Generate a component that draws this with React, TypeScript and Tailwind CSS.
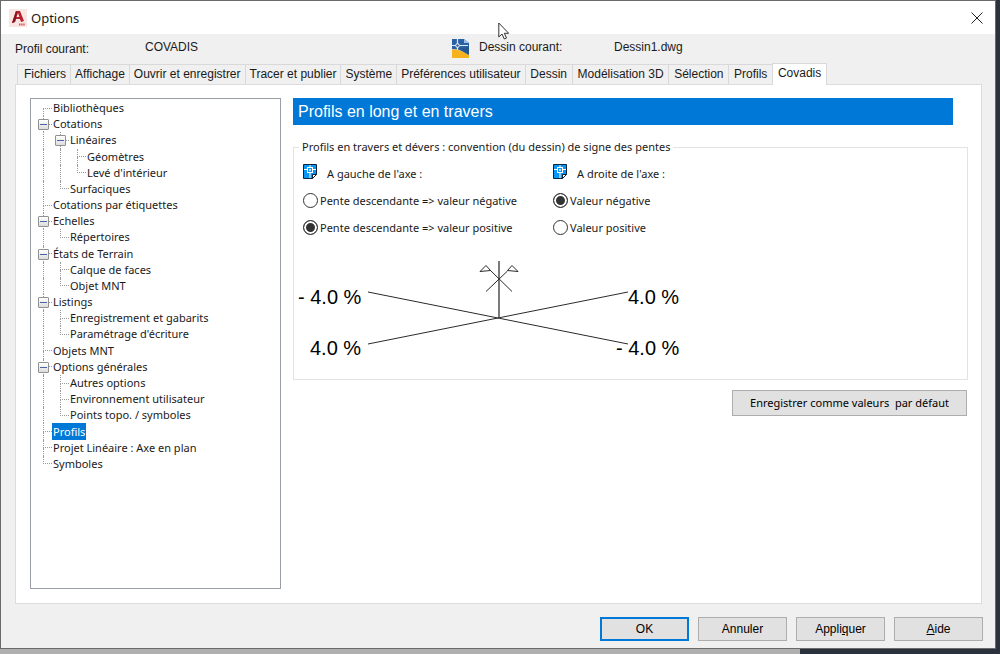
import { useState, type ReactNode } from "react";
import clsx from "clsx";

const TABS = [
  "Fichiers",
  "Affichage",
  "Ouvrir et enregistrer",
  "Tracer et publier",
  "Système",
  "Préférences utilisateur",
  "Dessin",
  "Modélisation 3D",
  "Sélection",
  "Profils",
  "Covadis",
];

type TreeNode = { label: string; children?: TreeNode[] };

const TREE: TreeNode[] = [
  { label: "Bibliothèques" },
  {
    label: "Cotations",
    children: [
      { label: "Linéaires", children: [{ label: "Géomètres" }, { label: "Levé d'intérieur" }] },
      { label: "Surfaciques" },
    ],
  },
  { label: "Cotations par étiquettes" },
  { label: "Echelles", children: [{ label: "Répertoires" }] },
  { label: "États de Terrain", children: [{ label: "Calque de faces" }, { label: "Objet MNT" }] },
  {
    label: "Listings",
    children: [{ label: "Enregistrement et gabarits" }, { label: "Paramétrage d'écriture" }],
  },
  { label: "Objets MNT" },
  {
    label: "Options générales",
    children: [
      { label: "Autres options" },
      { label: "Environnement utilisateur" },
      { label: "Points topo. / symboles" },
    ],
  },
  { label: "Profils" },
  { label: "Projet Linéaire : Axe en plan" },
  { label: "Symboles" },
];

type Row = { label: string; guides: boolean[]; first: boolean; last: boolean; parent: boolean };

// guides holds, for each ancestor level, whether its vertical line goes on below
function flatten(nodes: TreeNode[], guides: boolean[] = []): Row[] {
  return nodes.flatMap((n, i) => {
    const last = i === nodes.length - 1;
    return [
      { label: n.label, guides, first: i === 0 && guides.length === 0, last, parent: !!n.children },
      ...flatten(n.children ?? [], [...guides, !last]),
    ];
  });
}

const ROWS = flatten(TREE);

function TreeRow({ row, selected, onSelect }: { row: Row; selected: boolean; onSelect: () => void }) {
  return (
    <li role="treeitem" aria-selected={selected} className="flex min-h-0 flex-1 items-stretch">
      {row.guides.map((on, i) => (
        <span key={i} className="flex w-[17px] shrink-0 pl-2">
          {on && <span className="border-l border-dotted border-[#999]" />}
        </span>
      ))}
      <span className="relative flex w-[17px] shrink-0 flex-col pl-2">
        <span
          className={clsx(
            "flex-1 border-b border-dotted border-[#999]",
            !row.first && "border-l",
          )}
        />
        <span className={clsx("flex-1 border-dotted border-[#999]", !row.last && "border-l")} />
        {row.parent && (
          <button
            type="button"
            aria-label={`Réduire ${row.label}`}
            className="absolute top-[3px] left-[3px] flex h-[11px] w-[11px] items-center justify-center rounded-[1px] border border-[#919191] bg-linear-to-b from-white to-[#dcdcdc]"
          >
            <span className="h-px w-[7px] bg-[#4b63a7]" />
          </button>
        )}
      </span>
      <button
        type="button"
        onClick={onSelect}
        className={clsx(
          "flex items-center px-px leading-4 whitespace-nowrap",
          selected && "bg-[#0078d7] text-white",
        )}
      >
        {row.label}
      </button>
    </li>
  );
}

function SheetIcon() {
  return (
    <svg width="14" height="15" viewBox="0 0 14 15" aria-hidden="true">
      <path d="M.5.5h13v10l-4 4h-9z" fill="#0a96f5" stroke="#10233c" />
      <path d="M1 5.5h3M10 5.5h3M7 1v2M7 9v5" stroke="#fff" fill="none" />
      <rect x="4.5" y="3.5" width="5" height="5" fill="#0a96f5" stroke="#fff" />
      <path d="M6 5h2v2H6z" fill="#bfe3ff" />
      <path d="M9.5 14.5v-4h4z" fill="#fff" stroke="#10233c" />
    </svg>
  );
}

function Radio(props: { name: string; label: string; checked: boolean; onChange: () => void }) {
  return (
    <label className="flex h-[27px] items-center gap-0.5">
      <input
        type="radio"
        name={props.name}
        checked={props.checked}
        onChange={props.onChange}
        className="size-[15px] shrink-0 appearance-none rounded-full border border-[#333] bg-white checked:bg-[#333] checked:shadow-[inset_0_0_0_2px_white]"
      />
      {props.label}
    </label>
  );
}

function SlopeGroup(props: { name: string; title: string; options: string[]; initial: number }) {
  const [value, setValue] = useState(props.initial);
  return (
    <div role="radiogroup" aria-labelledby={`${props.name}-title`}>
      <div className="flex h-[27px] items-center gap-[10px]">
        <span className="pb-1">
          <SheetIcon />
        </span>
        <span id={`${props.name}-title`}>{props.title}</span>
      </div>
      {props.options.map((o, i) => (
        <Radio key={o} name={props.name} label={o} checked={value === i} onChange={() => setValue(i)} />
      ))}
    </div>
  );
}

function SlopeDiagram() {
  return (
    <svg
      width="400"
      height="137"
      viewBox="294 242 400 137"
      className="block max-w-full font-['Liberation_Sans',Arial,sans-serif] text-[20px]"
      role="img"
      aria-label="Convention de signe des pentes"
    >
      <g fill="none" stroke="#2b2b2b">
        <path d="M368 292 628 344M368 344 628 292" />
        <path d="M499 261v57" stroke="#444" strokeWidth="1.4" />
        <path d="M486 291.500 507.500 271M512 291.500 490 270" />
        <path d="M490.500 270.500 486 265.500 480 271.500 490.500 270.500M507.500 270.500 512 265.500 518 271.500 507.500 270.500" />
      </g>
      <g fill="#000">
        <text x="298" y="304">- 4.0 %</text>
        <text x="310" y="355">4.0 %</text>
        <text x="628" y="304">4.0 %</text>
        <text x="616" y="355">- 4.0 %</text>
      </g>
    </svg>
  );
}

function DialogButton({ children, primary }: { children: ReactNode; primary?: boolean }) {
  return (
    <button
      type="button"
      className={clsx(
        "h-6 w-[89px] bg-[#e1e1e1] text-black",
        primary ? "border-2 border-[#0078d7]" : "border border-[#adadad]",
      )}
    >
      {children}
    </button>
  );
}

export default function App() {
  const [tab, setTab] = useState("Covadis");
  const [node, setNode] = useState("Profils");

  return (
    <div className="flex min-h-screen flex-col bg-[#2b323d] font-['Liberation_Sans',Arial,sans-serif] text-[12px] leading-4 text-[#1a1a1a]">
      <div className="mr-1 flex flex-1 flex-col border border-[#6a6a6a] bg-[#f0f0f0]">
        <header className="flex h-[33px] items-center bg-white pr-3 pl-2">
          <svg width="18" height="18" viewBox="0 0 18 18" aria-hidden="true">
            <path d="M0 0h18v18H0z" fill="#f9e6e2" />
            <path d="M3 14 7 2h4l4 10-3 1-1-3H7l-1 3z" fill="#b5202c" />
            <path d="M7.500 8 9 4l1.500 4z" fill="#f9e6e2" />
            <path d="M3 14 7 2l1 1-2 10z" fill="#7f151e" />
            <path d="M10 15.500h6" stroke="#e5575b" strokeWidth="2" strokeDasharray="1.500 .6" />
          </svg>
          <h1 className="ml-1 font-['Noto_Sans',sans-serif] text-[13px] leading-5">Options</h1>
          <button type="button" aria-label="Fermer" className="ml-auto">
            <svg width="12" height="12" viewBox="0 0 12 12">
              <path d="M.5.5l11 11M11.500.5l-11 11" stroke="#222" />
            </svg>
          </button>
        </header>

        <div className="flex h-[29px] items-center pl-[14px]">
          <span className="w-[130px]">Profil courant:</span>
          <span className="w-[307px] pb-1">COVADIS</span>
          <svg width="17" height="19" viewBox="0 0 17 19" aria-hidden="true">
            <path d="M0 0h12l5 4v8L0 10z" fill="#2b62a4" />
            <path d="M12 0v4h5z" fill="#9fc0e4" />
            <path d="M0 10.500h6l11 5V19H0z" fill="#f5b21c" />
            <path d="M6 10 17 8v8z" fill="#24578f" />
            <path d="M0 6.500h16M5.500 0v11" stroke="#dbe9f7" strokeWidth="1.200" />
            <circle cx="5.500" cy="6.500" r="1.800" fill="#2b62a4" stroke="#fff" />
          </svg>
          <span className="ml-[10px] w-[135px] pb-1">Dessin courant:</span>
          <span className="pb-1">Dessin1.dwg</span>
        </div>

        <div role="tablist" className="z-10 -mb-px ml-4 flex h-[22px] max-w-[810px] items-end">
          {TABS.map((t, i) => (
            <button
              key={t}
              type="button"
              role="tab"
              aria-selected={t === tab}
              onClick={() => setTab(t)}
              className={clsx(
                "border-t border-l border-[#d9d9d9] px-1 whitespace-nowrap first:pl-[6px] last:border-r",
                i > 5 ? "flex-auto" : "flex-none",
                t === tab ? "h-[22px] bg-white pb-1" : "mb-px h-5 pb-0.5",
              )}
            >
              {t}
            </button>
          ))}
        </div>

        <main className="mr-[13px] ml-[14px] flex flex-1 gap-3 border border-[#dcdcdc] bg-white pt-[13px] pr-[13px] pb-[14px] pl-[14px] font-['Noto_Sans',sans-serif] text-[11px]">
          <div className="w-[251px] shrink-0 border border-[#9a9ea6] pt-px pl-1">
            <ul role="tree" aria-label="Rubriques" className="flex h-[372px] flex-col">
              {ROWS.map((r) => (
                <TreeRow
                  key={r.label}
                  row={r}
                  selected={r.label === node}
                  onSelect={() => setNode(r.label)}
                />
              ))}
            </ul>
          </div>

          <section className="flex min-w-0 flex-1 flex-col">
            <h2 className="mr-[15px] flex h-[27px] items-center bg-[#0078d7] px-[5px] font-['Liberation_Sans',Arial,sans-serif] text-[16px] text-white">
              Profils en long et en travers
            </h2>
            <fieldset className="mt-[14px] border border-[#e3e3e3]">
              <legend className="ml-[5px] px-[3px]">
                Profils en travers et dévers : convention (du dessin) de signe des pentes
              </legend>
              <div className="flex pt-[5px] pb-px pl-[9px]">
                <div className="w-[250px]">
                  <SlopeGroup
                    name="gauche"
                    title="A gauche de l'axe :"
                    options={["Pente descendante => valeur négative", "Pente descendante => valeur positive"]}
                    initial={1}
                  />
                </div>
                <SlopeGroup
                  name="droite"
                  title="A droite de l'axe :"
                  options={["Valeur négative", "Valeur positive"]}
                  initial={0}
                />
              </div>
              <SlopeDiagram />
            </fieldset>
            <button
              type="button"
              className="mt-[10px] mr-px h-[26px] w-[235px] self-end border border-[#adadad] bg-[#e1e1e1] whitespace-pre text-black"
            >
              {"Enregistrer comme valeurs  par défaut"}
            </button>
          </section>
        </main>

        <footer className="flex justify-end gap-[9px] pt-[13px] pr-3 pb-[7px]">
          <DialogButton primary>OK</DialogButton>
          <DialogButton>Annuler</DialogButton>
          <DialogButton>
            Appli<u>q</u>uer
          </DialogButton>
          <DialogButton>
            <u>A</u>ide
          </DialogButton>
        </footer>
      </div>
      <div className="h-[5px] w-4/5 bg-[#b0b0b0]" />

      {/* mouse pointer */}
      <svg
        width="12"
        height="18"
        viewBox="0 0 12 18"
        className="pointer-events-none absolute top-[22px] left-[498px] z-20"
        aria-hidden="true"
      >
        <path d="M.8 1v14l3.200-3 2.300 5 2.200-1-2.200-4.700h4.400z" fill="#fff" stroke="#333" />
      </svg>
    </div>
  );
}
